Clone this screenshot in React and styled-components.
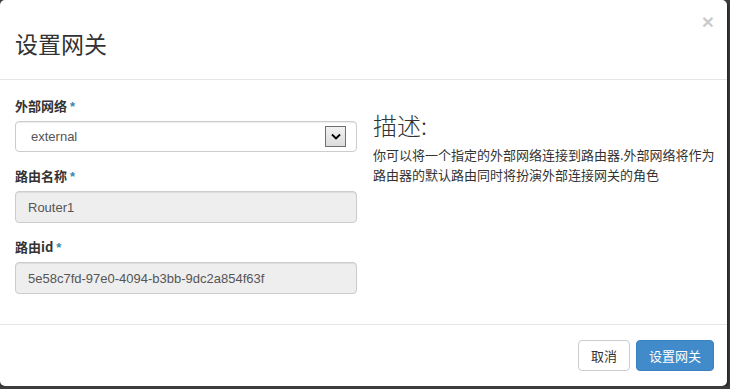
import React from 'react';
import styled, { createGlobalStyle } from 'styled-components';

const GlobalStyle = createGlobalStyle`
	html, body {
		margin: 0;
		padding: 0;
		background: #3c3c3c;
	}
	body {
		font-family: "Liberation Sans", "Noto Sans CJK SC", Arial, sans-serif;
		font-size: 13px;
		color: #333;
	}
`;

const Modal = styled.div`
	width: 727px;
	height: 386px;
	background: #fff;
	border-radius: 5px;
	box-shadow: 1px 2px 3px rgba(0, 0, 0, 0.5);
	display: flex;
	flex-direction: column;
	overflow: hidden;
`;

const Header = styled.div`
	position: relative;
	height: 80px;
	box-sizing: border-box;
	border-bottom: 1px solid #e5e5e5;
	padding: 0 15px;
	display: flex;
	align-items: center;
`;

const Title = styled.h3`
	margin: 8px 0 0;
	font-size: 23px;
	font-weight: normal;
	line-height: 1.1;
	color: #333;
	font-family: "Noto Sans CJK SC", sans-serif;
`;

const Close = styled.button`
	position: absolute;
	top: 11px;
	right: 13px;
	border: 0;
	background: none;
	padding: 0;
	font-family: "Liberation Sans", Arial, sans-serif;
	font-size: 21px;
	font-weight: bold;
	line-height: 1;
	color: #000;
	opacity: 0.2;
	cursor: pointer;
`;

const Body = styled.div`
	flex: 1;
	padding: 16px 8px 15px 15px;
	display: grid;
	grid-template-columns: 342px 1fr;
	column-gap: 16px;
`;

const Group = styled.div`
	margin-bottom: 14px;
`;

const Label = styled.label`
	display: block;
	font-weight: bold;
	font-size: 13px;
	line-height: 20px;
	margin-bottom: 4px;
	color: #333;
	font-family: "Noto Sans CJK SC", sans-serif;
`;

const Required = styled.span`
	color: #3a87ad;
	font-family: "Liberation Sans", Arial, sans-serif;
	font-weight: bold;
	margin-left: 3px;
`;

const Field = styled.div`
	height: ${p => (p.readOnly ? '32px' : '31px')};
	box-sizing: border-box;
	border: 1px solid #ccc;
	border-radius: 4px;
	background: ${p => (p.readOnly ? '#eee' : '#fff')};
	box-shadow: inset 0 1px 1px rgba(0, 0, 0, 0.075);
	display: flex;
	align-items: center;
	padding: 0 10px 0 ${p => (p.readOnly ? '12px' : '15px')};
	font-size: 13px;
	color: #555;
	font-family: "Liberation Sans", Arial, sans-serif;
`;

const Value = styled.span`
	flex: 1;
`;

const Arrow = styled.span`
	width: 21px;
	height: 21px;
	box-sizing: border-box;
	border: 1px solid #707070;
	background: linear-gradient(#f2f2f2, #dcdcdc);
	display: flex;
	align-items: center;
	justify-content: center;
`;

const Side = styled.div`
	padding-top: 16px;
`;

const SideTitle = styled.h3`
	margin: 0 0 7px;
	font-size: 24px;
	font-weight: 300;
	line-height: 1.1;
	color: #333;
	font-family: "Noto Sans CJK SC", sans-serif;
`;

const SideText = styled.p`
	margin: 0;
	font-size: 13px;
	line-height: 20px;
	color: #333;
	font-family: "Noto Sans CJK SC", sans-serif;
`;

const Footer = styled.div`
	border-top: 1px solid #e5e5e5;
	padding: 15px 13px 15px 15px;
	display: flex;
	justify-content: flex-end;
	gap: 6px;
`;

const Button = styled.button`
	height: 31px;
	padding: 0 12px;
	border-radius: 4px;
	font-size: 13px;
	font-family: "Noto Sans CJK SC", sans-serif;
	border: 1px solid ${p => (p.primary ? '#3b7fbf' : '#ccc')};
	background: ${p => (p.primary ? '#428bca' : '#fff')};
	color: ${p => (p.primary ? '#fff' : '#333')};
	cursor: pointer;
`;

const fields = [
	{ label: '路由名称', value: 'Router1' },
	{ label: '路由id', value: '5e58c7fd-97e0-4094-b3bb-9dc2a854f63f' },
];

export default function App() {
	return (
		<>
			<GlobalStyle />
			<Modal>
				<Header>
					<Title>设置网关</Title>
					<Close>×</Close>
				</Header>
				<Body>
					<div>
						<Group>
							<Label>
								外部网络<Required>*</Required>
							</Label>
							<Field>
								<Value>external</Value>
								<Arrow>
									<svg width="10" height="7" viewBox="0 0 10 7">
										<path d="M1 1.5 L5 5.5 L9 1.5" fill="none" stroke="#000" strokeWidth="1.8" />
									</svg>
								</Arrow>
							</Field>
						</Group>
						{fields.map(f => (
							<Group key={f.label}>
								<Label>
									{f.label}
									<Required>*</Required>
								</Label>
								<Field readOnly>
									<Value>{f.value}</Value>
								</Field>
							</Group>
						))}
					</div>
					<Side>
						<SideTitle>描述:</SideTitle>
						<SideText>
							你可以将一个指定的外部网络连接到路由器.外部网络将作为路由器的默认路由同时将扮演外部连接网关的角色
						</SideText>
					</Side>
				</Body>
				<Footer>
					<Button>取消</Button>
					<Button primary>设置网关</Button>
				</Footer>
			</Modal>
		</>
	);
}
